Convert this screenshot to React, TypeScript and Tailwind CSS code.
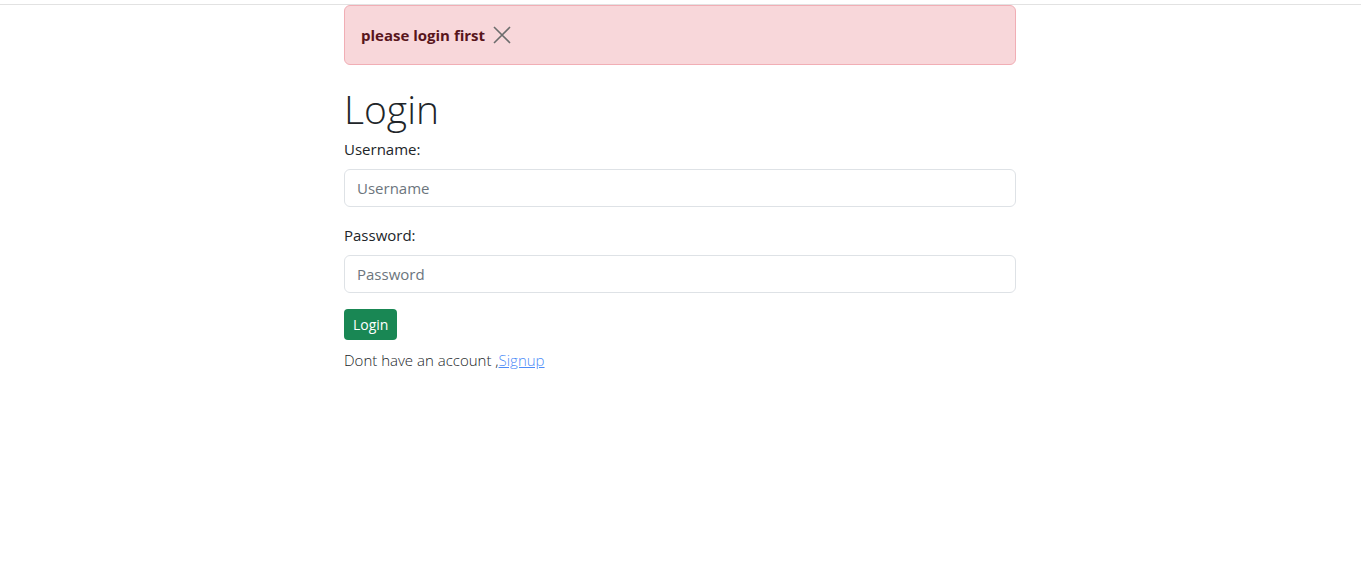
import { useState } from 'react';

export default function App() {
  const [showAlert, setShowAlert] = useState(true);

  return (
    <div className="min-h-screen bg-white font-['Open_Sans',sans-serif] text-[#212529]">
      <div className="h-[5px] border-b border-[#e2e2e2]" />

      <div className="w-[673px] mx-auto pr-[1px]">
        {showAlert && (
          <div className="flex items-center h-[60px] px-4 bg-[#f8d7da] border border-[#f1aeb5] rounded-md text-[#58151c]">
            <strong className="text-[15px] font-bold">please login first</strong>
            <button
              onClick={() => setShowAlert(false)}
              className="ml-2 text-[#6c6c6c]"
              aria-label="Close"
            >
              <svg width="18" height="18" viewBox="0 0 18 18" fill="none" stroke="currentColor" strokeWidth="1.6">
                <path d="M1 1l16 16M17 1L1 17" />
              </svg>
            </button>
          </div>
        )}

        <h1 className="mt-[21px] text-[39px] font-light leading-[1.2] text-[#212529]">Login</h1>

        <form className="mt-[4px]" onSubmit={(e) => e.preventDefault()}>
          <div className="mb-[16px]">
            <label className="block text-[15px] leading-6 mb-[8px]">Username:</label>
            <input
              type="text"
              placeholder="Username"
              className="w-full h-[38px] px-3 text-[15px] border border-[#dee2e6] rounded-md placeholder:text-[#6c757d] outline-none"
            />
          </div>
          <div className="mb-[16px]">
            <label className="block text-[15px] leading-6 mb-[8px]">Password:</label>
            <input
              type="password"
              placeholder="Password"
              className="w-full h-[38px] px-3 text-[15px] border border-[#dee2e6] rounded-md placeholder:text-[#6c757d] outline-none"
            />
          </div>
          <button className="h-[31px] px-[9px] bg-[#198754] text-white text-[14px] rounded">Login</button>
        </form>

        <p className="mt-[8px] text-[15px] font-light leading-6">
          Dont have an account ,<a href="#" className="text-[#4d8cf8] underline">Signup</a>
        </p>
      </div>
    </div>
  );
}
